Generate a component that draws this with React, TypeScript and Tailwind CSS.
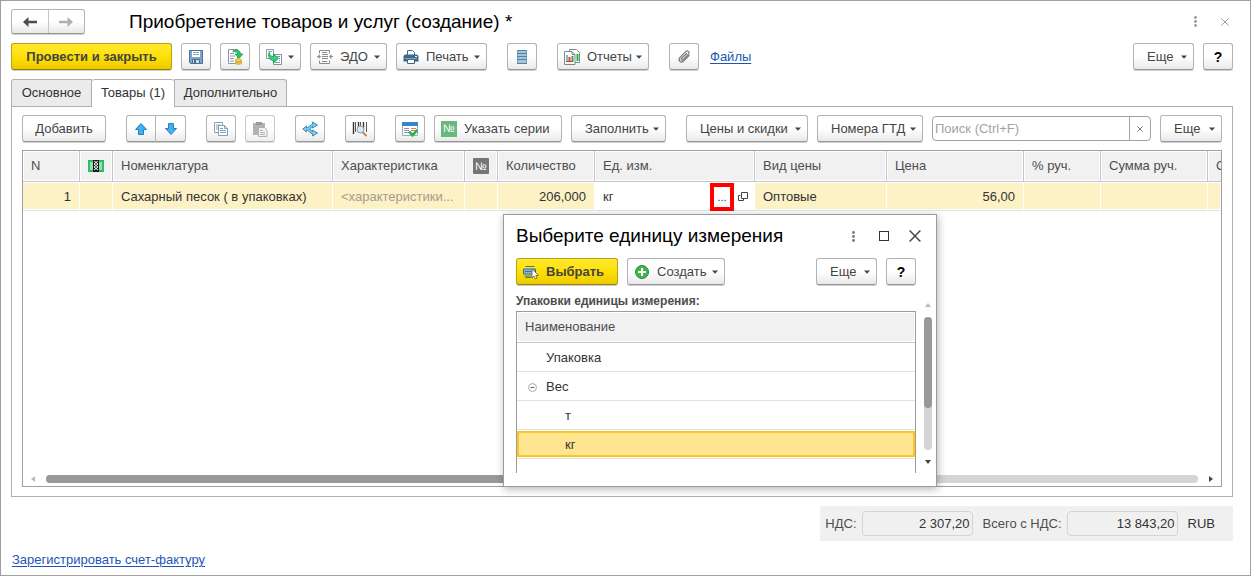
import React from 'react';

type IconProps = { children: React.ReactNode; size?: number };

function Svg({ children, size = 16 }: IconProps) {
  return (
    <svg width={size} height={size} viewBox={`0 0 ${size} ${size}`} fill="none" aria-hidden="true" className="shrink-0">
      {children}
    </svg>
  );
}

const Caret = () => (
  <svg width="6" height="4" viewBox="0 0 6 4" aria-hidden="true" className="shrink-0">
    <path d="M0 .5h6L3 3.700z" fill="#444" />
  </svg>
);

const BackIcon = ({ color }: { color: string }) => (
  <Svg>
    <path d="M1 8 6.500 3v3.700H15v2.600H6.500V13z" fill={color} />
  </Svg>
);

const ForwardIcon = ({ color }: { color: string }) => (
  <Svg>
    <path d="M15 8 9.500 3v3.700H1v2.600h8.500V13z" fill={color} />
  </Svg>
);

const SaveIcon = () => (
  <Svg>
    <path d="M1.500 1.500h13v13h-12l-1-1z" fill="#7ba6d0" stroke="#4a6f97" />
    <path d="M4 2h8v6H4z" fill="#fff" />
    <path d="M5 3.500h6M5 5.500h6" stroke="#9aa9b8" />
    <path d="M4.500 10.500h7v4h-7z" fill="#cfdae3" stroke="#4a6f97" />
    <path d="M6 11h2v3H6z" fill="#45688c" />
  </Svg>
);

const PostIcon = () => (
  <Svg>
    <path d="M1.500.5h9v14h-9z" fill="#fff" stroke="#8b9aa8" />
    <path d="M3 4.500h4M3 7h5M3 9.500h4M3 12h4" stroke="#8b9aa8" />
    <path d="M6 1.500c4-1.500 7.500 0 7.500 3.500H16l-4 4.500L8 5h2.500C10.500 3 8.500 2 6 3z" fill="#2ac769" stroke="#149547" strokeWidth=".7" />
    <path d="M8.500 11v3.500c0 1 6 1 6 0V11" fill="#f1c84d" stroke="#d69d25" strokeWidth=".8" />
    <ellipse cx="11.500" cy="11" rx="3" ry="1.200" fill="#ffe27c" stroke="#d69d25" strokeWidth=".8" />
    <path d="M8.500 12.800c1.500 1 4.500 1 6 0" stroke="#d69d25" strokeWidth=".8" />
  </Svg>
);

const CreateFromIcon = () => (
  <Svg>
    <path d="M.5.5h7v9h-7z" fill="#fff" stroke="#8b9aa8" />
    <path d="M2 2.500h4M2 4.500h2M2 6.500h1" stroke="#8b9aa8" />
    <path d="M7.500 5.500h8v10h-8z" fill="#fff" stroke="#7f93a8" />
    <path d="M11 7.500h3M13 9.500h1M13 11.500h1M9 13.500h5" stroke="#7f93a8" />
    <path d="M3.500 3.500c0 3 1.500 4 4 4V5L12.500 9.500l-5 4.500v-2.500C4 11.500 1.500 8 3.500 3.500z" fill="#35d378" stroke="#149547" strokeWidth=".8" />
  </Svg>
);

const EdoIcon = () => (
  <Svg>
    <path d="M2.500 4.500v-3h10v3M2.500 11.500v3h10v-3" stroke="#8b8b8b" />
    <path d="M5 3.500h5M5 5.500h6M5 7.500h6M5 9.500h6M5 12.500h5" stroke="#8b8b8b" />
    <path d="M0 7.500h2M13 7.500h3" stroke="#8b8b8b" />
    <path d="M1.500 5 4 7.500 1.500 10zM14.500 5v5L12 7.500z" fill="#8b8b8b" />
  </Svg>
);

const PrintIcon = () => (
  <Svg>
    <path d="M4.500 6V1.500h5l2 2V6" fill="#fff" stroke="#48698b" />
    <path d="M2 5.500h12l1.500 1.500v5.500H.500V7z" fill="#40658b" />
    <path d="M2 9.500h12" stroke="#8aa6c0" />
    <path d="M4.500 10.500h7v4h-7z" fill="#fff" stroke="#40658b" />
    <path d="M12 7.500h2" stroke="#fff" />
  </Svg>
);

const ListIcon = () => (
  <Svg>
    <path d="M3.500 1.500h9v13h-9z" fill="#a3c6dc" stroke="#7fa5be" />
    <path d="M3 1.500h10M3 4.500h10M3 7.500h10M3 10.500h10M3 14.500h10" stroke="#55809f" />
  </Svg>
);

const ReportIcon = () => (
  <Svg>
    <path d="M5.500.5h7l3 3v10h-10z" fill="#fff" stroke="#7b8995" />
    <path d="M13.500 5v7" stroke="#2eaa42" strokeWidth="2" />
    <path d="M.5 2.500h7.500l3 3v10H.5z" fill="#fff" stroke="#7b8995" />
    <path d="M8 2.500v3h3" stroke="#7b8995" />
    <path d="M3 6v7" stroke="#2563b0" />
    <path d="M5.500 8v5" stroke="#e53b25" strokeWidth="2" />
    <path d="M8.500 7v6" stroke="#2eaa42" strokeWidth="2" />
    <path d="M2 12.500h7" stroke="#e53b25" />
  </Svg>
);

const ClipIcon = () => (
  <Svg>
    <path d="m10.500 4.500-5 5c-.9 1 .4 2.300 1.400 1.400l5.600-5.700c1.800-2-.8-4.500-2.800-2.600L4 8.400c-2.600 2.800.8 6.300 3.600 3.700L13 6.500" stroke="#777" strokeWidth="1.200" strokeLinecap="round" />
  </Svg>
);

const ArrowUp = () => (
  <Svg>
    <path d="M8 2.500 13.500 8.500h-3v5h-5v-5h-3z" fill="#42b0f0" stroke="#287fb5" />
  </Svg>
);

const ArrowDown = () => (
  <Svg>
    <path d="M8 13.500 2.500 7.500h3v-5h5v5h3z" fill="#42b0f0" stroke="#287fb5" />
  </Svg>
);

const CopyIcon = () => (
  <Svg>
    <path d="M1.500 1.500h8v10h-8z" fill="#fff" stroke="#7fa3b5" />
    <path d="M3 4h4M3 6h2M3 8h2" stroke="#7fa3b5" />
    <path d="M5.500 4.500h6l3 3v7h-9z" fill="#fff" stroke="#7fa3b5" />
    <path d="M11.500 4.500v3h3M7 7.500h3M7 9.500h6M7 11.500h6" stroke="#7fa3b5" />
  </Svg>
);

const PasteIcon = () => (
  <Svg>
    <path d="M1 2h12v12H1z" fill="#98918b" />
    <path d="M4 1h6v3H4z" fill="#77726e" />
    <path d="M6.500 6.500h6l2.500 2.500v6.500H6.500z" fill="#eee" stroke="#8e9299" />
    <path d="M8 9.500h3M8 11.500h5M8 13.500h5" stroke="#8e9299" />
  </Svg>
);

const ShareIcon = () => (
  <Svg>
    <path d="M3 8h2c3 0 3.500-4 6.500-4M5 8c3 0 3.500 4 6.500 4" stroke="#2d83b9" strokeWidth="3" />
    <path d="m10.500 1 5 3-5 3zM10.500 9l5 3-5 3z" fill="#7fcdf5" stroke="#2d83b9" strokeWidth=".9" />
    <path d="m.8 8 3.700-3v6z" fill="#7fcdf5" stroke="#2d83b9" strokeWidth=".9" />
    <path d="M3 8h2c3 0 3.500-4 6.500-4M5 8c3 0 3.500 4 6.500 4" stroke="#7fcdf5" strokeWidth="1.400" />
  </Svg>
);

const BarcodeIcon = () => (
  <Svg>
    <path d="M1.500 1v12M6.500 1v9M11.500 1v7" stroke="#333" strokeWidth="1.400" />
    <path d="M3.500 1v10M8.500 1v7M14.500 1v10" stroke="#555" />
    <circle cx="8.500" cy="8.500" r="3.500" fill="#d4e8f6" stroke="#8d9aa5" />
    <path d="m11 11.500 3 3" stroke="#c98954" strokeWidth="2" strokeLinecap="round" />
  </Svg>
);

const CheckListIcon = () => (
  <Svg>
    <path d="M.5 1.500h15v13H.5z" fill="#fff" stroke="#9caab5" />
    <path d="M0 1h16v4H0z" fill="#3884c8" />
    <path d="M2 7.500h5M2 9.500h5M2 11.500h5" stroke="#8b9aa8" />
    <path d="M9 7.500h5M9 9.500h5" stroke="#e47a5b" />
    <path d="m7 10.500 3.500 3.700 5-5.200" stroke="#28b44c" strokeWidth="2.600" />
  </Svg>
);

const NumberBadge = ({ tone }: { tone: 'green' | 'gray' }) => (
  <span
    className={`flex size-4 shrink-0 items-center justify-center text-[11px] leading-none text-white ${tone === 'green' ? 'bg-[#67b97e]' : 'rounded-[1px] bg-[#757575]'}`}
  >
    №
  </span>
);

const SeriesIcon = () => (
  <Svg>
    <path d="M0 2h16v12H0z" fill="#2fb36f" />
    <path d="M2 4h12v8H2z" fill="#8ce0ae" />
    <path d="M0 4h2M0 8h2M0 12h2M14 4h2M14 8h2M14 12h2" stroke="#35ba76" strokeWidth="2" />
    <path d="M5 2h6v12H5z" fill="#111" />
    <path d="m6 3 4 3-4 3 4 3M10 3 6 6l4 3-4 3" stroke="#fff" />
  </Svg>
);

const SelectIcon = () => (
  <Svg>
    <path d="M2.500 2.500h9M2.500 13.500h6" stroke="#4a7396" />
    <path d="M.5 5h12v5H.5z" fill="#86b7dc" stroke="#3b6d9b" />
    <path d="M2 7.500h9M1.500 12h7" stroke="#3b6d9b" />
    <path d="M9 5v9l2-2 1.300 3 1.700-.8-1.300-2.700h2.800z" fill="#fff" stroke="#665b40" strokeWidth=".8" />
  </Svg>
);

const PlusIcon = () => (
  <Svg>
    <circle cx="8" cy="8" r="6.500" fill="#46b352" stroke="#278d38" />
    <path d="M8 4v8M4 8h8" stroke="#fff" strokeWidth="2" />
  </Svg>
);

const Kebab = ({ color }: { color: string }) => (
  <svg width="3" height="11" viewBox="0 0 3 11" aria-hidden="true">
    <circle cx="1.500" cy="1.500" r="1.400" fill={color} />
    <circle cx="1.500" cy="5.500" r="1.400" fill={color} />
    <circle cx="1.500" cy="9.500" r="1.400" fill={color} />
  </svg>
);

const Cross = ({ color, size }: { color: string; size: number }) => (
  <svg width={size} height={size} viewBox="0 0 10 10" aria-hidden="true">
    <path d="m.5.5 9 9m0-9-9 9" stroke={color} strokeWidth="1.200" />
  </svg>
);

const buttonBase =
  'flex h-[27px] shrink-0 items-center rounded-[3px] border border-[#b3b3b3] border-b-[#969696] bg-linear-to-b from-white from-50% to-[#e9e9e9] text-[13px] text-[#444] shadow-[0_1px_0_#cfcfcf]';
const yellow =
  'flex h-[27px] shrink-0 items-center rounded-[3px] border border-[#b9a012] border-b-[#928000] bg-linear-to-b from-[#ffe92d] via-[#fee000] to-[#edcb00] text-[13px] font-bold text-[#444] shadow-[0_1px_0_#cfcfcf]';

type ButtonProps = { className: string; icon?: React.ReactNode; children: React.ReactNode };

function MenuButton({ className, icon, children }: ButtonProps) {
  return (
    <button type="button" className={`${buttonBase} justify-between pr-1.5 ${icon ? 'pl-1.5' : 'pl-[13px]'} ${className}`}>
      <span className="flex items-center gap-[7px] whitespace-nowrap">
        {icon}
        {children}
      </span>
      <Caret />
    </button>
  );
}

function IconButton({ label, children, className = '' }: { label: string; children: React.ReactNode; className?: string }) {
  return (
    <button type="button" aria-label={label} className={`${buttonBase} w-[30px] justify-center ${className}`}>
      {children}
    </button>
  );
}

const HelpButton = () => (
  <button type="button" className={`${buttonBase} w-[30px] justify-center`}>
    <span className="text-[14px] font-bold text-black">?</span>
  </button>
);

const th = 'h-[31px] truncate border-r border-[#c6c6c6] px-2 text-left font-normal text-[#4d4d4d] shadow-[inset_1px_1px_0_#fff,inset_-1px_-1px_0_#fff]';
const td = 'h-[29px] truncate border-r border-y border-white border-b-[#e3e3e3] bg-[#fdf1c6] px-2 shadow-[inset_0_-1px_0_#fff]';

function GoodsTable() {
  return (
    <table className="w-full table-fixed border-separate border-spacing-0 text-[13px] text-[#333]">
      <colgroup>
        <col className="w-[57px]" />
        <col className="w-[33px]" />
        <col className="w-[220px]" />
        <col className="w-[132px]" />
        <col className="w-[33px]" />
        <col className="w-[97px]" />
        <col className="w-[160px]" />
        <col className="w-[132px]" />
        <col className="w-[137px]" />
        <col className="w-[77px]" />
        <col className="w-[107px]" />
        <col />
      </colgroup>
      <thead>
        <tr className="bg-[#f1f1f1] [&>th]:border-b">
          <th className={th}>N</th>
          <th className={th}><SeriesIcon /></th>
          <th className={th}>Номенклатура</th>
          <th className={th}>Характеристика</th>
          <th className={th}><NumberBadge tone="gray" /></th>
          <th className={th}>Количество</th>
          <th className={th}>Ед. изм.</th>
          <th className={th}>Вид цены</th>
          <th className={th}>Цена</th>
          <th className={th}>% руч.</th>
          <th className={th}>Сумма руч.</th>
          <th className="overflow-hidden whitespace-nowrap border-[#c6c6c6] pl-2 text-left font-normal text-[#4d4d4d] shadow-[inset_1px_1px_0_#fff]">С</th>
        </tr>
      </thead>
      <tbody>
        <tr>
          <td className={`${td} text-right`}>1</td>
          <td className={td} />
          <td className={td}>Сахарный песок ( в упаковках)</td>
          <td className={`${td} text-[#a3a08c]`}>&lt;характеристики...</td>
          <td className={td} />
          <td className={`${td} text-right`}>206,000</td>
          <td className="h-[29px] border-b border-[#e3e3e3] bg-white pl-2 pr-[7px] pt-px">
            <div className="flex h-[27px] items-center">
              <span className="grow">кг</span>
              <button type="button" aria-label="Выбрать единицу" className="h-7 w-6 self-start border-4 border-[#fe0000] text-[11px] leading-none">...</button>
              <button type="button" aria-label="Открыть единицу" className="ml-1">
                <svg width="10" height="10" viewBox="0 0 10 10" fill="none" aria-hidden="true">
                  <path d="M3.500.5h6v6h-6zM2.500 3.500h-2v5h5v-2" stroke="#444" />
                </svg>
              </button>
            </div>
          </td>
          <td className={td}>Оптовые</td>
          <td className={`${td} text-right`}>56,00</td>
          <td className={td} />
          <td className={td} />
          <td className={td} />
        </tr>
      </tbody>
    </table>
  );
}

function UnitDialog() {
  const row = 'h-[29px] border-b border-[#e1e1e1] pt-0.5';
  return (
    <section
      role="dialog"
      aria-labelledby="unit-title"
      className="absolute left-[502px] top-[213px] h-[273px] w-[434px] border border-[#9c9c9c] bg-white shadow-[1px_2px_8px_rgba(0,0,0,0.3)]"
    >
      <header className="flex h-[42px] items-center pl-3 pr-[15px]">
        <h2 id="unit-title" className="grow text-[19px] text-black">Выберите единицу измерения</h2>
        <button type="button" aria-label="Меню" className="mr-6"><Kebab color="#777" /></button>
        <button type="button" aria-label="Развернуть" className="mr-5 size-[10px] border border-[#333]" />
        <button type="button" aria-label="Закрыть"><Cross color="#444" size={12} /></button>
      </header>
      <div className="flex gap-[9px] pl-3 pr-5 pt-px">
        <button type="button" className={`${yellow} w-[102px] gap-[7px] pl-1.5`}>
          <SelectIcon />
          Выбрать
        </button>
        <MenuButton className="w-[98px]" icon={<PlusIcon />}>Создать</MenuButton>
        <div className="grow" />
        <MenuButton className="w-[61px]">Еще</MenuButton>
        <HelpButton />
      </div>
      <div className="flex pl-3 pr-1 pt-2">
        <div className="grow">
          <h3 className="h-[18px] text-[12px] leading-4 font-bold text-[#4d4d4d]">Упаковки единицы измерения:</h3>
          <div className="h-[162px] overflow-hidden border border-b-0 border-[#9c9c9c]">
            <table className="w-full border-separate border-spacing-0 text-[13px] text-[#333]">
              <thead>
                <tr>
                  <th className="h-[31px] border-b border-[#c6c6c6] bg-[#f1f1f1] pl-2 text-left font-normal text-[#4d4d4d] shadow-[inset_1px_1px_0_#fff,inset_-1px_-1px_0_#fff]">Наименование</th>
                </tr>
              </thead>
              <tbody>
                <tr><td className={`${row} pl-[29px]`}>Упаковка</td></tr>
                <tr>
                  <td className={`${row} pl-[11px]`}>
                    <div className="flex items-center gap-[9px]">
                      <button type="button" aria-label="Свернуть">
                        <svg width="9" height="9" viewBox="0 0 9 9" fill="none" aria-hidden="true">
                          <circle cx="4.500" cy="4.500" r="4" stroke="#aaa" />
                          <path d="M2.500 4.500h4" stroke="#666" />
                        </svg>
                      </button>
                      <span>Вес</span>
                    </div>
                  </td>
                </tr>
                <tr><td className={`${row} pl-12`}>т</td></tr>
                <tr>
                  <td className="h-[29px] border-b border-[#e1e1e1] py-px">
                    <div className="flex h-[26px] items-center border-2 border-[#fbc724] bg-[#fee590] pl-[46px] pt-0.5">кг</div>
                  </td>
                </tr>
              </tbody>
            </table>
          </div>
        </div>
        <div className="ml-2 flex w-2 flex-col items-center pt-[10px]">
          <svg width="6" height="4" viewBox="0 0 6 4" aria-hidden="true"><path d="M3 0 6 4H0z" fill="#bbb" /></svg>
          <div className="mt-[10px] h-[133px] w-2 rounded-full bg-[#d5d5d5]">
            <div className="h-[91px] rounded-full bg-[#999]" />
          </div>
          <svg width="6" height="4" viewBox="0 0 6 4" aria-hidden="true" className="mt-[10px]"><path d="M0 0h6L3 4z" fill="#444" /></svg>
        </div>
      </div>
    </section>
  );
}

export default function App() {
  return (
    <main className="relative flex min-h-screen flex-col border border-[#a0a0a0] bg-white pl-[10px] pr-[17px] pt-2 font-['Liberation_Sans',Arial,sans-serif] leading-4">
      <header className="flex items-center">
        <div className="flex h-[25px] w-[74px] rounded-[3px] border border-[#b3b3b3] border-b-[#969696] bg-linear-to-b from-white from-50% to-[#e9e9e9] shadow-[0_1px_0_#cfcfcf]">
          <button type="button" aria-label="Назад" className="flex flex-1 items-center justify-center border-r border-[#c6c6c6]"><BackIcon color="#4d4d4d" /></button>
          <button type="button" aria-label="Вперед" className="flex flex-1 items-center justify-center"><ForwardIcon color="#b0b0b0" /></button>
        </div>
        <h1 className="ml-11 grow text-[19px] text-black">Приобретение товаров и услуг (создание) *</h1>
        <button type="button" aria-label="Меню" className="mr-6"><Kebab color="#999" /></button>
        <button type="button" aria-label="Закрыть" className="mr-1"><Cross color="#999" size={8} /></button>
      </header>

      <div className="mt-[9px] flex items-center gap-[9px]">
        <button type="button" className={`${yellow} w-[161px] justify-center`}>Провести и закрыть</button>
        <IconButton label="Записать"><SaveIcon /></IconButton>
        <IconButton label="Провести"><PostIcon /></IconButton>
        <button type="button" aria-label="Создать на основании" className={`${buttonBase} w-[42px] justify-between px-1.5`}>
          <CreateFromIcon />
          <Caret />
        </button>
        <MenuButton className="w-[77px]" icon={<EdoIcon />}>ЭДО</MenuButton>
        <MenuButton className="w-[91px]" icon={<PrintIcon />}>Печать</MenuButton>
        <IconButton label="Список" className="mx-[11px]"><ListIcon /></IconButton>
        <MenuButton className="w-[92px]" icon={<ReportIcon />}>Отчеты</MenuButton>
        <IconButton label="Прикрепить" className="ml-[11px]"><ClipIcon /></IconButton>
        <a href="#files" className="ml-0.5 text-[13px] text-[#1d55b5] underline underline-offset-2">Файлы</a>
        <div className="grow" />
        <MenuButton className="w-[61px]">Еще</MenuButton>
        <HelpButton />
      </div>

      <nav role="tablist" className="mt-[9px] flex h-[27px] text-[13px] text-[#333]">
        <button type="button" role="tab" aria-selected="false" className="w-[81px] rounded-tl-[3px] border border-b-0 border-[#b0b0b0] bg-[#ebebeb]">Основное</button>
        <button type="button" role="tab" aria-selected="true" className="relative -mb-px w-[82px] rounded-t-[3px] border-t border-[#b0b0b0] bg-white pb-px">Товары (1)</button>
        <button type="button" role="tab" aria-selected="false" className="w-[113px] rounded-tr-[3px] border border-b-0 border-[#b0b0b0] bg-[#ebebeb]">Дополнительно</button>
      </nav>

      <div className="flex h-[391px] flex-col border border-[#b0b0b0] px-[10px] pb-[9px] pt-2">
        <div className="flex items-center gap-[9px]">
          <button type="button" className={`${buttonBase} w-[84px] justify-center`}>Добавить</button>
          <div className="ml-[11px] flex">
            <IconButton label="Вверх" className="rounded-r-none"><ArrowUp /></IconButton>
            <IconButton label="Вниз" className="rounded-l-none border-l-0"><ArrowDown /></IconButton>
          </div>
          <IconButton label="Копировать" className="ml-[11px]"><CopyIcon /></IconButton>
          <IconButton label="Вставить" className="opacity-70"><PasteIcon /></IconButton>
          <IconButton label="Разбить" className="ml-[11px]"><ShareIcon /></IconButton>
          <IconButton label="Штрихкод" className="mx-[11px]"><BarcodeIcon /></IconButton>
          <IconButton label="Проверить"><CheckListIcon /></IconButton>
          <button type="button" className={`${buttonBase} w-[128px] gap-[7px] pl-1.5`}>
            <NumberBadge tone="green" />
            Указать серии
          </button>
          <MenuButton className="w-[95px]">Заполнить</MenuButton>
          <MenuButton className="ml-[11px] w-[122px]">Цены и скидки</MenuButton>
          <MenuButton className="w-[106px]">Номера ГТД</MenuButton>
          <div className="flex h-[25px] min-w-0 grow rounded-[4px] border border-[#a3a3a3]">
            <input aria-label="Поиск" placeholder="Поиск (Ctrl+F)" className="w-0 min-w-0 grow rounded-l-[4px] pl-0.5 text-[13px] outline-none placeholder:text-[#a3a3a3]" />
            <button type="button" aria-label="Очистить" className="flex w-[21px] items-center justify-center border-l border-[#a3a3a3]"><Cross color="#444" size={6} /></button>
          </div>
          <MenuButton className="w-[62px]">Еще</MenuButton>
        </div>

        <div className="mt-2 flex grow flex-col overflow-hidden border border-[#a0a0a0]">
          <GoodsTable />
          <div className="grow" />
          <div className="flex h-[15px] items-center px-2">
            <svg width="4" height="6" viewBox="0 0 4 6" aria-hidden="true"><path d="M4 0v6L0 3z" fill="#bbb" /></svg>
            <div className="mx-[11px] h-2 grow rounded-full bg-[#d5d5d5]">
              <div className="h-2 w-1/2 rounded-full bg-[#999]" />
            </div>
            <svg width="4" height="6" viewBox="0 0 4 6" aria-hidden="true"><path d="M0 0v6l4-3z" fill="#444" /></svg>
          </div>
        </div>
      </div>

      <div className="mt-[9px] flex h-[35px] items-center self-end bg-[#f0f0f0] pl-[5px] pr-[18px] text-[13px] text-[#4d4d4d]">
        <label htmlFor="vat">НДС:</label>
        <input id="vat" readOnly value="2 307,20" className="ml-[5px] h-[25px] w-[111px] rounded-[4px] border border-[#d4d4d4] pr-0.5 text-right text-[#333]" />
        <label htmlFor="total" className="ml-[10px]">Всего с НДС:</label>
        <input id="total" readOnly value="13 843,20" className="ml-[5px] h-[25px] w-[111px] rounded-[4px] border border-[#d4d4d4] pr-0.5 text-right text-[#333]" />
        <span className="ml-[10px] text-[#333]">RUB</span>
      </div>

      <a href="#invoice" className="mt-[11px] self-start pl-px text-[13px] text-[#1d55b5] underline underline-offset-2">Зарегистрировать счет-фактуру</a>

      <UnitDialog />
    </main>
  );
}
